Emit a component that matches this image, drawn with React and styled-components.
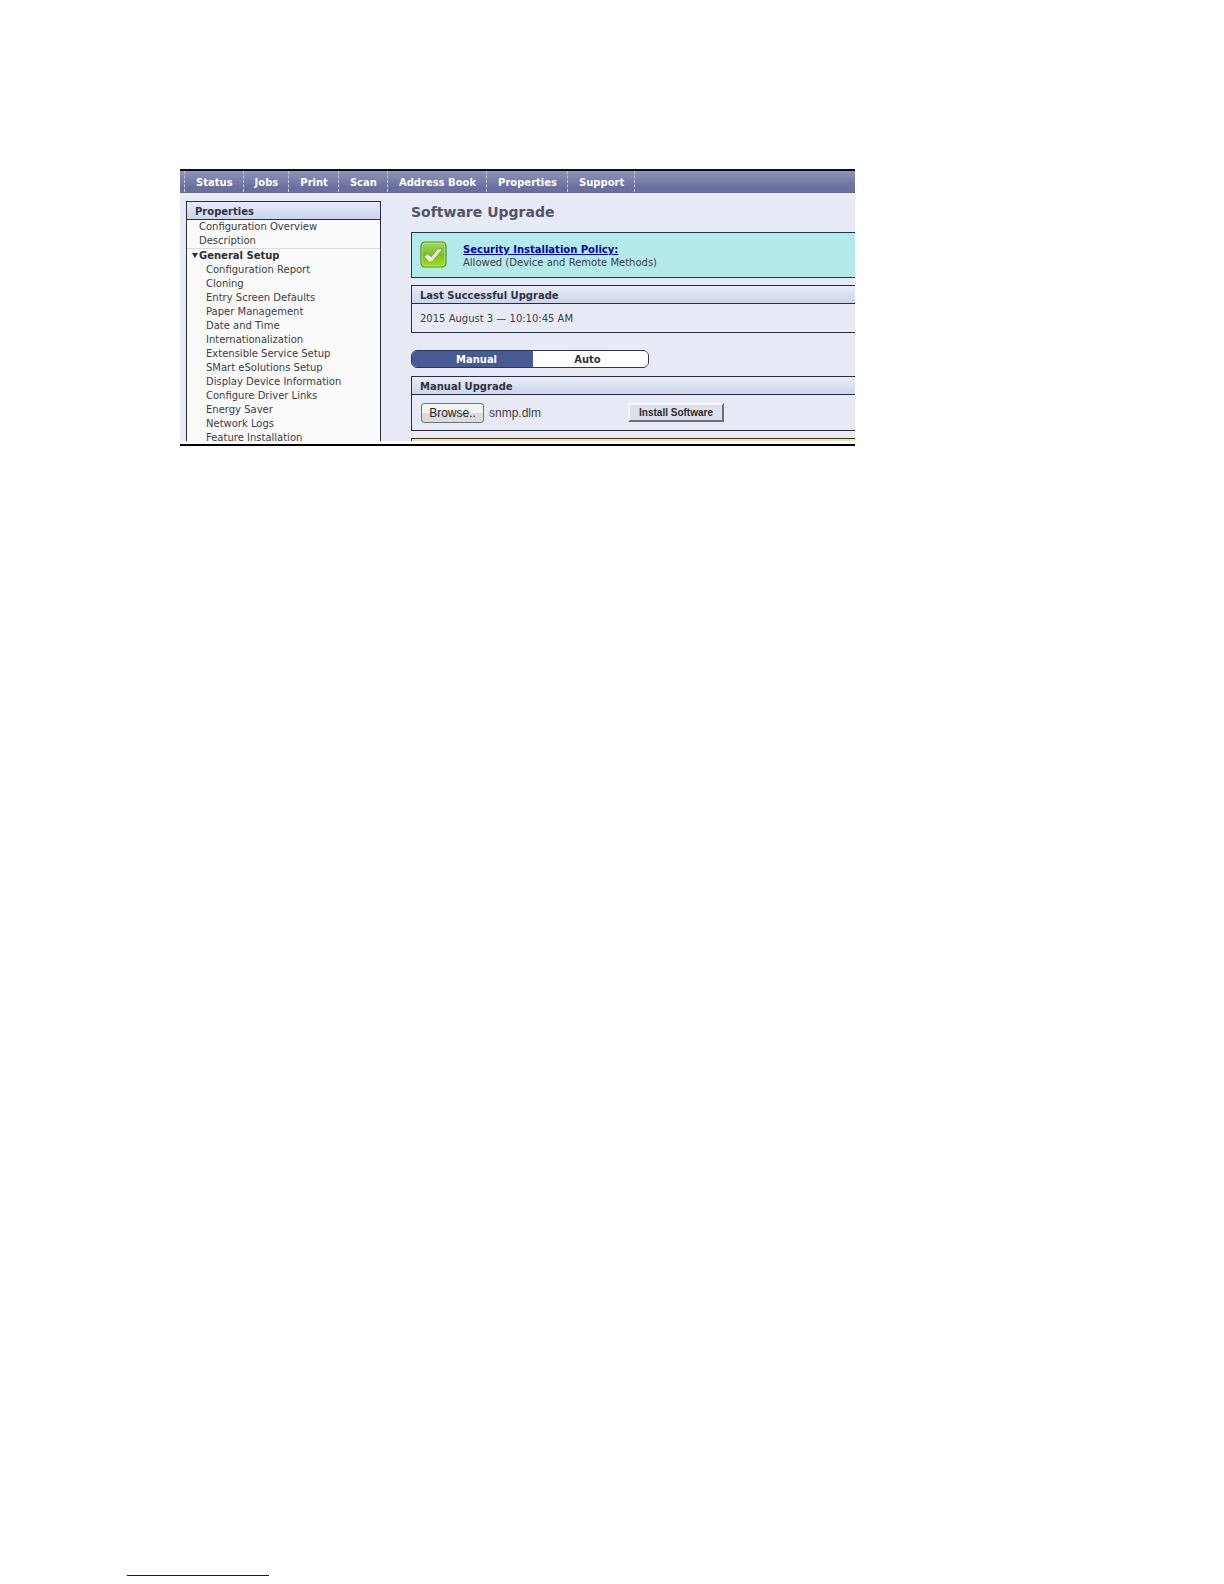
import React, { useState } from "react";
import styled, { createGlobalStyle } from "styled-components";

const GlobalStyle = createGlobalStyle`
  * {
    box-sizing: border-box;
  }

  body {
    margin: 0;
    background: #fff;
    color: #3c3d46;
    font-family: "DejaVu Sans", Verdana, sans-serif;
    font-size: 10px;
    line-height: 14px;
  }
`;

const Page = styled.div`
  display: flex;
  flex-direction: column;
  min-height: 100vh;
  padding: 169px 0 8px;
`;

const Device = styled.div`
  margin: 0 369px 0 180px;
  padding-bottom: 3px;
  border-top: 2px solid #0b0b22;
  border-bottom: 2px solid #000;
`;

const NavBar = styled.nav`
  display: flex;
  height: 22px;
  padding-left: 4px;
  background: linear-gradient(#8f94b8, #6a6ea0 80%);
  border-bottom: 1px solid #686b80;
`;

const NavLink = styled.a`
  padding: 2px 10px 0 11px;
  border-left: 1px dashed #c4c8e0;
  color: #fff;
  font-weight: 700;
  line-height: 20px;
  text-decoration: none;

  &:last-child {
    border-right: 1px dashed #c4c8e0;
  }
`;

const Body = styled.div`
  display: flex;
  gap: 30px;
  max-height: 248px;
  padding: 8px 0 0 6px;
  overflow: hidden;
  background: #e8ebf6;
`;

const Sidebar = styled.aside`
  flex: 0 0 195px;
  align-self: flex-start;
  background: #fafafa;
  border: 1px solid #2a2d3c;
  border-bottom: 0;
`;

const BarTitle = styled.h2`
  margin: 0;
  padding: 2px 8px 0;
  background: linear-gradient(#e8ecf8, #ccd5ea);
  border-bottom: 1px solid #2a2d3c;
  color: #30333f;
  font-size: 10px;
  line-height: 15px;
`;

const Menu = styled.ul`
  margin: 0;
  padding: 0 0 0 ${props => (props.$nested ? "19px" : "12px")};
  list-style: none;
`;

const MenuLink = styled.a`
  display: block;
  color: inherit;
  text-decoration: none;
  white-space: nowrap;
`;

const Group = styled.div`
  border-top: 1px solid #dcdcdc;
`;

const GroupButton = styled.button`
  display: flex;
  align-items: center;
  padding: 0 0 0 5px;
  border: 0;
  background: none;
  color: #2e2f36;
  font: inherit;
  font-weight: 700;

  & svg {
    width: 7px;
    height: 9px;
  }
`;

const Content = styled.main`
  flex: 1;
  min-width: 0;
`;

const Title = styled.h1`
  margin: 0 0 10px;
  padding-top: 1px;
  color: #50536a;
  font-size: 14px;
  line-height: 20px;
`;

const Notice = styled.section`
  display: flex;
  align-items: center;
  gap: 16px;
  height: 46px;
  margin-bottom: 7px;
  padding: 0 8px;
  background: #b3ebeb;
  border: 1px solid #26344a;
  border-right: 0;

  & svg {
    flex: none;
    width: 27px;
    height: 27px;
    margin-bottom: 2px;
  }

  & a {
    color: #0000c0;
    font-weight: 700;
  }
`;

const NoticeText = styled.div`
  padding-top: 2px;
  line-height: 13px;
`;

const Panel = styled.section`
  border: 1px solid #2a2d3c;
  border-right: 0;
`;

const PanelText = styled.p`
  margin: 0;
  padding: 8px 8px 6px;
`;

const Tabs = styled.div`
  display: flex;
  width: 238px;
  margin: 17px 0 8px;
  border: 1px solid #30364e;
  border-radius: 6px;
  overflow: hidden;
`;

const Tab = styled.button`
  flex: ${props => (props.$wide ? "0 0 121px" : "1")};
  height: 16px;
  padding: 2px 0 0;
  padding-left: ${props => (props.$wide ? "8px" : "0")};
  padding-right: ${props => (props.$wide ? "0" : "6px")};
  border: 0;
  background: ${props => (props.$active ? "#465b94" : "#fff")};
  color: ${props => (props.$active ? "#fff" : "#30333f")};
  font: inherit;
  font-weight: 700;
`;

const UploadRow = styled.div`
  display: flex;
  align-items: center;
  gap: 5px;
  height: 35px;
  padding: 0 9px;
  font-family: "Liberation Sans", Arial, sans-serif;
  font-size: 12px;
`;

const BrowseButton = styled.button`
  width: 63px;
  height: 20px;
  padding: 0;
  border: 1px solid #70727a;
  border-radius: 3px;
  background: linear-gradient(#f3f3f3 50%, #dcdcde 50%);
  color: #222;
  font: inherit;
`;

const FileName = styled.span`
  flex: 0 0 134px;
`;

const InstallButton = styled.button`
  width: 96px;
  height: 19px;
  padding: 0;
  border: 2px solid;
  border-color: #f4f4fa #6b6d7c #6b6d7c #f4f4fa;
  background: #dfe1ea;
  color: #2a2b30;
  font: inherit;
  font-size: 10px;
  font-weight: 700;
`;

const Warning = styled.section`
  height: 20px;
  margin-top: 7px;
  background: #f3e2b0;
  border: 1px solid #3a3020;
  border-right: 0;
`;

const FootRule = styled.hr`
  width: 142px;
  margin: auto 0 0 127px;
  border: 0;
  border-top: 1px solid #12127c;
`;

const sections = [
  "Status",
  "Jobs",
  "Print",
  "Scan",
  "Address Book",
  "Properties",
  "Support"
];

const setupItems = [
  "Configuration Report",
  "Cloning",
  "Entry Screen Defaults",
  "Paper Management",
  "Date and Time",
  "Internationalization",
  "Extensible Service Setup",
  "SMart eSolutions Setup",
  "Display Device Information",
  "Configure Driver Links",
  "Energy Saver",
  "Network Logs",
  "Feature Installation"
];

const MenuList = ({ items, nested }) => (
  <Menu $nested={nested}>
    {items.map(item => (
      <li key={item}>
        <MenuLink href="#">{item}</MenuLink>
      </li>
    ))}
  </Menu>
);

const CheckIcon = () => (
  <svg viewBox="0 0 27 27" aria-hidden="true">
    <defs>
      <linearGradient id="green" x1="0" y1="0" x2="0" y2="1">
        <stop offset="0" stopColor="#a3d860" />
        <stop offset="0.5" stopColor="#7cc026" />
        <stop offset="1" stopColor="#a2e010" />
      </linearGradient>
    </defs>
    <rect
      x="1"
      y="1"
      width="25"
      height="25"
      rx="4"
      fill="url(#green)"
      stroke="#4f8f22"
      strokeWidth="1.2"
    />
    <rect
      x="2.2"
      y="2.2"
      width="22.6"
      height="22.6"
      rx="3"
      fill="none"
      stroke="#bfe97a"
      strokeWidth="0.8"
    />
    <path
      d="M4 15.5L7.5 13l3.8 2.8L17.5 8l4.8-.5-1.6 3L12.500 20.500l-3.500 1z"
      fill="#e8f2de"
      stroke="#5d9a28"
      strokeWidth="0.7"
      strokeLinejoin="round"
    />
  </svg>
);

const App = () => {
  const [open, setOpen] = useState(true);
  const [mode, setMode] = useState("Manual");

  return (
    <Page>
      <GlobalStyle />
      <Device>
        <NavBar>
          {sections.map(name => (
            <NavLink key={name} href="#">
              {name}
            </NavLink>
          ))}
        </NavBar>
        <Body>
          <Sidebar>
            <BarTitle>Properties</BarTitle>
            <MenuList items={["Configuration Overview", "Description"]} />
            <Group>
              <GroupButton aria-expanded={open} onClick={() => setOpen(!open)}>
                <svg viewBox="0 0 7 9" aria-hidden="true">
                  <path d="M0 1h6L3 6z" fill="#2e2f36" />
                </svg>
                General Setup
              </GroupButton>
              {open ? <MenuList items={setupItems} nested /> : ""}
            </Group>
          </Sidebar>
          <Content>
            <Title>Software Upgrade</Title>
            <Notice>
              <CheckIcon />
              <NoticeText>
                <a href="#">Security Installation Policy:</a>
                <div>Allowed (Device and Remote Methods)</div>
              </NoticeText>
            </Notice>
            <Panel>
              <BarTitle>Last Successful Upgrade</BarTitle>
              <PanelText>2015 August 3 — 10:10:45 AM</PanelText>
            </Panel>
            <Tabs>
              {["Manual", "Auto"].map(name => (
                <Tab
                  key={name}
                  $wide={name === "Manual"}
                  $active={mode === name}
                  onClick={() => setMode(name)}
                >
                  {name}
                </Tab>
              ))}
            </Tabs>
            <Panel>
              <BarTitle>Manual Upgrade</BarTitle>
              <UploadRow>
                <BrowseButton>Browse..</BrowseButton>
                <FileName>snmp.dlm</FileName>
                <InstallButton>Install Software</InstallButton>
              </UploadRow>
            </Panel>
            <Warning />
          </Content>
        </Body>
      </Device>
      <FootRule />
    </Page>
  );
};

export default App;
